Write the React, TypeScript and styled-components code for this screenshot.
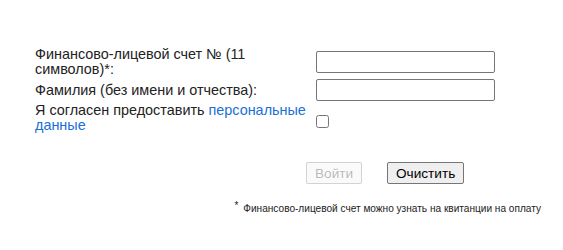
import React from "react";
import styled, { createGlobalStyle } from "styled-components";

const Global = createGlobalStyle`
  html, body { margin: 0; padding: 0; background: #fff; }
  body { font-family: "Liberation Sans", Arial, sans-serif; color: #222; }
`;

const Page = styled.div`
  width: 563px;
  height: 250px;
  padding-top: 47px;
  box-sizing: border-box;
`;

const Form = styled.div`
  display: grid;
  grid-template-columns: 281px 179px;
  row-gap: 2px;
  align-items: center;
  padding-left: 35px;
`;

const Label = styled.div`
  font-size: 14.4px;
  line-height: 15px;
  width: 278px;
`;

const Link = styled.a`
  color: #1a6fd8;
  text-decoration: none;
`;

const TextInput = styled.input`
  box-sizing: border-box;
  width: 179px;
  height: 22px;
  margin: 0;
  border: 1px solid #767676;
  border-radius: 2px;
  padding: 1px 2px;
  font-family: "Liberation Sans", Arial, sans-serif;
  font-size: 13px;
`;

const Check = styled.input`
  width: 13px;
  height: 13px;
  margin: 12px 0 0 0;
  align-self: start;
`;

const Buttons = styled.div`
  display: flex;
  gap: 25px;
  padding-left: 306px;
  margin-top: 29px;
`;

const Button = styled.button`
  box-sizing: border-box;
  height: 22px;
  margin: 0;
  padding: 0 8px;
  font-family: "Liberation Sans", Arial, sans-serif;
  font-size: 13.6px;
  font-weight: 400;
  color: #000;
  background: #efefef;
  border: 1px solid #767676;
  border-radius: 2px;
  &:disabled {
    color: rgba(16, 16, 16, 0.3);
    background: rgba(239, 239, 239, 0.3);
    border-color: rgba(118, 118, 118, 0.3);
  }
`;

const Note = styled.div`
  display: flex;
  justify-content: flex-end;
  padding-right: 22px;
  margin-top: 19px;
  font-size: 10.1px;
  line-height: 12px;
  color: #222;
`;

const Star = styled.sup`
  font-size: 10px;
  line-height: 0;
  margin-right: 5px;
  position: relative;
  top: 1px;
`;

export default function App() {
  return (
    <Page>
      <Global />
      <Form>
        <Label>Финансово-лицевой счет № (11 символов)*:</Label>
        <TextInput type="text" />
        <Label>Фамилия (без имени и отчества):</Label>
        <TextInput type="text" />
        <Label>
          Я согласен предоставить <Link href="#">персональные данные</Link>
        </Label>
        <Check type="checkbox" />
      </Form>
      <Buttons>
        <Button disabled>Войти</Button>
        <Button>Очистить</Button>
      </Buttons>
      <Note>
        <span>
          <Star>*</Star>
          Финансово-лицевой счет можно узнать на квитанции на оплату
        </span>
      </Note>
    </Page>
  );
}
